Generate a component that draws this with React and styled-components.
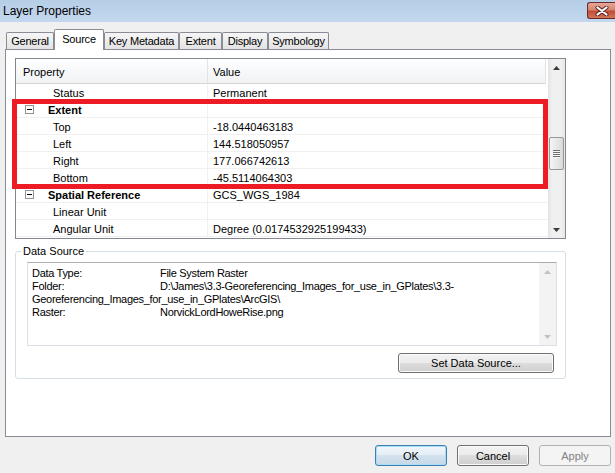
import React from "react";
import styled, { createGlobalStyle } from "styled-components";

const GlobalStyle = createGlobalStyle`
  html, body {
    margin: 0;
    padding: 0;
  }
  body {
    background: #f0f0f0;
    font-family: "Liberation Sans", Arial, sans-serif;
    font-size: 11px;
    color: #000;
  }
`;

const tabs = [
    { id: 1, label: "General", w: 48 },
    { id: 2, label: "Source", w: 50, active: true },
    { id: 3, label: "Key Metadata", w: 75 },
    { id: 4, label: "Extent", w: 43 },
    { id: 5, label: "Display", w: 46 },
    { id: 6, label: "Symbology", w: 61 }
];

const rows = [
    { id: 1, name: "Status", value: "Permanent" },
    { id: 2, name: "Extent", group: true },
    { id: 3, name: "Top", value: "-18.0440463183" },
    { id: 4, name: "Left", value: "144.518050957" },
    { id: 5, name: "Right", value: "177.066742613" },
    { id: 6, name: "Bottom", value: "-45.5114064303" },
    { id: 7, name: "Spatial Reference", value: "GCS_WGS_1984", group: true },
    { id: 8, name: "Linear Unit", value: "" },
    { id: 9, name: "Angular Unit", value: "Degree (0.0174532925199433)" }
];

const sourceLines = [
    { id: 1, label: "Data Type:", text: "File System Raster" },
    {
        id: 2,
        label: "Folder:",
        text: "D:\\James\\3.3-Georeferencing_Images_for_use_in_GPlates\\3.3-"
    },
    { id: 3, text: "Georeferencing_Images_for_use_in_GPlates\\ArcGIS\\" },
    { id: 4, label: "Raster:", text: "NorvickLordHoweRise.png" }
];

const UpArrow = ({ color = "#3c3c3c" }) => (
    <svg width="7" height="4" viewBox="0 0 7 4">
        <polygon points="0,4 7,4 3.5,0" fill={color} />
    </svg>
);

const DownArrow = ({ color = "#3c3c3c" }) => (
    <svg width="7" height="4" viewBox="0 0 7 4">
        <polygon points="0,0 7,0 3.5,4" fill={color} />
    </svg>
);

export default function App() {
    return (
        <>
            <GlobalStyle />
            <Window>
                <TitleBar>
                    <Title>Layer Properties</Title>
                    <CloseButton>
                        <svg width="14" height="10" viewBox="0 0 14 10">
                            <path
                                d="M2.5 1.5 L11.5 8.5 M11.5 1.5 L2.5 8.5"
                                stroke="#5a2020"
                                strokeWidth="4"
                                strokeLinecap="round"
                            />
                            <path
                                d="M2.5 1.5 L11.5 8.5 M11.5 1.5 L2.5 8.5"
                                stroke="#ffffff"
                                strokeWidth="2.2"
                                strokeLinecap="round"
                            />
                        </svg>
                    </CloseButton>
                </TitleBar>

                <Body>
                    <TabStrip>
                        {tabs.map(tab => (
                            <Tab key={tab.id} $w={tab.w} $active={tab.active}>
                                {tab.label}
                            </Tab>
                        ))}
                    </TabStrip>

                    <Panel>
                        <ListWrap>
                            <PropertyList>
                                <Grid>
                                    <HeaderCell $first $pad={7}>
                                        Property
                                    </HeaderCell>
                                    <HeaderCell $pad={5}>Value</HeaderCell>
                                    {rows.map(row => (
                                        <React.Fragment key={row.id}>
                                            <Cell $first $pad={row.group ? 9 : 37}>
                                                {row.group && (
                                                    <ExpandBox>
                                                        <Minus />
                                                    </ExpandBox>
                                                )}
                                                {row.group ? (
                                                    <GroupName>{row.name}</GroupName>
                                                ) : (
                                                    row.name
                                                )}
                                            </Cell>
                                            <Cell $pad={5}>{row.value}</Cell>
                                        </React.Fragment>
                                    ))}
                                </Grid>
                                <ScrollBar>
                                    <ArrowButton>
                                        <UpArrow />
                                    </ArrowButton>
                                    <Track $offset={61}>
                                        <Thumb>
                                            <Grip />
                                            <Grip />
                                            <Grip />
                                            <Grip />
                                        </Thumb>
                                    </Track>
                                    <ArrowButton>
                                        <DownArrow />
                                    </ArrowButton>
                                </ScrollBar>
                            </PropertyList>
                            <Highlight />
                        </ListWrap>

                        <Group>
                            <GroupLegend>Data Source</GroupLegend>
                            <GroupBody>
                                <InfoBox>
                                    <InfoText>
                                        {sourceLines.map(line => (
                                            <InfoLine key={line.id}>
                                                {line.label && (
                                                    <InfoLabel>{line.label}</InfoLabel>
                                                )}
                                                <span>{line.text}</span>
                                            </InfoLine>
                                        ))}
                                    </InfoText>
                                    <ScrollBar $light>
                                        <ArrowButton>
                                            <UpArrow color="#c2c2c2" />
                                        </ArrowButton>
                                        <Track $offset={0} />
                                        <ArrowButton>
                                            <DownArrow color="#c2c2c2" />
                                        </ArrowButton>
                                    </ScrollBar>
                                </InfoBox>
                                <GroupActions>
                                    <Button $w={156} $h={20}>
                                        Set Data Source...
                                    </Button>
                                </GroupActions>
                            </GroupBody>
                        </Group>
                    </Panel>

                    <DialogButtons>
                        <Button $default>OK</Button>
                        <Button>Cancel</Button>
                        <Button disabled>Apply</Button>
                    </DialogButtons>
                </Body>
            </Window>
        </>
    );
}

const Window = styled.div`
    width: 615px;
    height: 473px;
    overflow: hidden;
    display: flex;
    flex-direction: column;
    background: #f0f0f0;
`;

const TitleBar = styled.div`
    height: 22px;
    flex-shrink: 0;
    display: flex;
    align-items: flex-start;
    justify-content: space-between;
    background: linear-gradient(#b6cde7, #c3d8ee);
`;

const Title = styled.div`
    font-size: 12px;
    line-height: 22px;
    padding-left: 3px;
`;

const CloseButton = styled.div`
    margin-top: 2px;
    width: 28px;
    height: 17px;
    box-sizing: border-box;
    border: 1px solid #6b2b28;
    border-right: none;
    border-radius: 3px 0 0 3px;
    background: linear-gradient(#e7a797 0%, #d6866f 45%, #c24b35 55%, #d17758 100%);
    display: flex;
    align-items: center;
    justify-content: center;
`;

const Body = styled.div`
    flex: 1;
    display: flex;
    flex-direction: column;
    padding: 7px 4px 0 5px;
`;

const TabStrip = styled.div`
    height: 20px;
    display: flex;
    align-items: flex-end;
    padding-left: 1px;
    position: relative;
    z-index: 1;
`;

const Tab = styled.div`
    width: ${p => p.$w}px;
    height: ${p => (p.$active ? 21 : 17)}px;
    margin-bottom: ${p => (p.$active ? -1 : 0)}px;
    padding-bottom: ${p => (p.$active ? 2 : 0)}px;
    box-sizing: border-box;
    border: 1px solid #898c95;
    border-bottom: none;
    border-radius: 2px 2px 0 0;
    background: ${p =>
        p.$active ? "#ffffff" : "linear-gradient(#f6f6f6, #e3e3e3)"};
    display: flex;
    align-items: center;
    justify-content: center;
    white-space: nowrap;
    letter-spacing: -0.2px;
`;

const Panel = styled.div`
    height: 388px;
    box-sizing: border-box;
    border: 1px solid #898c95;
    background: #ffffff;
    padding: 8px 44px 0 9px;
    display: flex;
    flex-direction: column;
`;

const ListWrap = styled.div`
    position: relative;
    height: 181px;
    flex-shrink: 0;
`;

const PropertyList = styled.div`
    height: 100%;
    box-sizing: border-box;
    border: 1px solid #828790;
    display: flex;
    background: #ffffff;
`;

const Grid = styled.div`
    flex: 1;
    display: grid;
    grid-template-columns: 192px 1fr;
    grid-template-rows: 25px;
    grid-auto-rows: 17px;
    align-content: start;
    overflow: hidden;
`;

const HeaderCell = styled.div`
    display: flex;
    align-items: center;
    padding-left: ${p => p.$pad}px;
    padding-top: 1px;
    background: linear-gradient(#ffffff, #f7f8f9 50%, #f1f2f4);
    border-bottom: 1px solid #d5d5d5;
    border-right: 1px solid #e3e3e3;
    margin-right: ${p => (p.$first ? 0 : 2)}px;
`;

const Cell = styled.div`
    display: flex;
    align-items: center;
    padding-left: ${p => p.$pad}px;
    padding-top: 1px;
    border-bottom: 1px solid #f0f0f0;
    border-right: ${p => (p.$first ? "1px solid #f0f0f0" : "none")};
    white-space: nowrap;
    overflow: hidden;
`;

const ExpandBox = styled.div`
    width: 9px;
    height: 9px;
    box-sizing: border-box;
    border: 1px solid #919191;
    display: flex;
    align-items: center;
    justify-content: center;
    margin-right: 14px;
    flex-shrink: 0;
`;

const Minus = styled.div`
    width: 5px;
    height: 1px;
    background: #000;
`;

const GroupName = styled.span`
    font-weight: bold;
`;

const ScrollBar = styled.div`
    width: 17px;
    flex-shrink: 0;
    display: flex;
    flex-direction: column;
    background: ${p =>
        p.$light
            ? "#f3f3f3"
            : "linear-gradient(90deg, #e3e3e3, #f0f0f0 25%, #f0f0f0 75%, #e8e8e8)"};
`;

const ArrowButton = styled.div`
    height: 17px;
    display: flex;
    align-items: center;
    justify-content: center;
`;

const Track = styled.div`
    flex: 1;
    padding-top: ${p => p.$offset}px;
    box-sizing: border-box;
`;

const Thumb = styled.div`
    height: 33px;
    margin: 0 1px;
    box-sizing: border-box;
    border: 1px solid #979797;
    border-radius: 2px;
    background: linear-gradient(90deg, #f4f4f4, #e6e6e6 60%, #d8d8d8);
    display: flex;
    flex-direction: column;
    align-items: center;
    justify-content: center;
    gap: 1px;
`;

const Grip = styled.div`
    width: 7px;
    height: 1px;
    background: #6e6e6e;
    box-shadow: 0 1px 0 #f6f6f6;
`;

const Highlight = styled.div`
    position: absolute;
    left: -3px;
    top: 41px;
    width: 536px;
    height: 90px;
    box-sizing: border-box;
    border: 5px solid #ed1c24;
    pointer-events: none;
`;

const Group = styled.fieldset`
    margin: 6px 0 0 0;
    padding: 0;
    min-width: 0;
    border: 1px solid #d5dfe5;
    border-radius: 3px;
`;

const GroupLegend = styled.legend`
    margin-left: 5px;
    padding: 0 2px;
    line-height: 12px;
`;

const GroupBody = styled.div`
    padding: 5px 8px 5px 11px;
    display: flex;
    flex-direction: column;
    gap: 7px;
`;

const InfoBox = styled.div`
    height: 84px;
    box-sizing: border-box;
    border: 1px solid #dbdfe6;
    border-top-color: #abadb3;
    display: flex;
    background: #ffffff;
`;

const InfoText = styled.div`
    flex: 1;
    padding: 4px 4px 2px;
    line-height: 13px;
    letter-spacing: -0.3px;
    overflow: hidden;
`;

const InfoLine = styled.div`
    display: flex;
    white-space: nowrap;
`;

const InfoLabel = styled.span`
    width: 128px;
    flex-shrink: 0;
`;

const GroupActions = styled.div`
    display: flex;
    justify-content: flex-end;
    padding-right: 3px;
`;

const DialogButtons = styled.div`
    display: flex;
    justify-content: flex-end;
    gap: 10px;
    margin-top: 8px;
`;

const Button = styled.button`
    width: ${p => p.$w || 72}px;
    height: ${p => p.$h || 21}px;
    box-sizing: border-box;
    padding: 0;
    font-family: "Liberation Sans", Arial, sans-serif;
    font-size: 11px;
    color: #000;
    border-radius: 3px;
    border: 1px solid ${p => (p.$default ? "#3c7fb1" : "#707070")};
    background: ${p =>
        p.$default
            ? "linear-gradient(#f1f7fb, #e3edf4 50%, #d3e2ed 50%, #c6d9e7)"
            : "linear-gradient(#f2f2f2, #ebebeb 50%, #dddddd 50%, #cfcfcf)"};
    box-shadow: ${p =>
        p.$default ? "inset 0 0 0 1px #a9dcf5" : "inset 0 0 0 1px #fbfbfb"};

    &:disabled {
        color: #838383;
        border-color: #adb2b5;
        background: #f4f4f4;
        box-shadow: none;
    }
`;
